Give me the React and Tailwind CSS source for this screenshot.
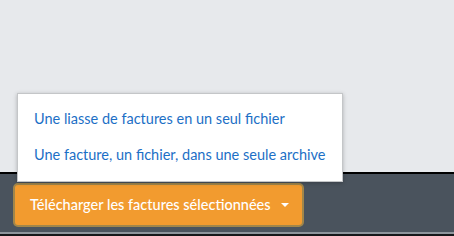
export default function App() {
  return (
    <div className="relative w-[454px] h-[236px] flex flex-col overflow-hidden" style={{ fontFamily: 'Lato, "Open Sans", sans-serif' }}>
      <div className="h-[172px] bg-[#e7e9ec]" />
      <div className="h-[60px] border-t-2 border-black bg-[#4a535d] pt-[9px] pl-[13px]">
        <button className="flex items-center h-[44px] w-[291px] rounded-[5px] border-2 border-[#a1864a] bg-[#f29b2f] pl-[15px] text-[14.5px] font-medium text-white">
          Télécharger les factures sélectionnées
          <span className="ml-[10px] w-0 h-0 border-x-[4px] border-x-transparent border-t-[4px] border-t-white" />
        </button>
      </div>
      <div className="h-[2px] bg-[#8e959c]" />
      <div className="flex-1 bg-[#16181a]" />

      <div className="absolute left-[17px] top-[93px] w-[326px] h-[89px] bg-white border border-[#c4c6c8] shadow-[0_1px_4px_rgba(0,0,0,0.25)] pt-[7px]">
        <div className="h-[36px] flex items-center px-[16px] text-[14.5px] text-[#1c6fc6]">
          Une liasse de factures en un seul fichier
        </div>
        <div className="h-[36px] flex items-center px-[16px] text-[14.5px] text-[#1c6fc6]">
          Une facture, un fichier, dans une seule archive
        </div>
      </div>
    </div>
  )
}
